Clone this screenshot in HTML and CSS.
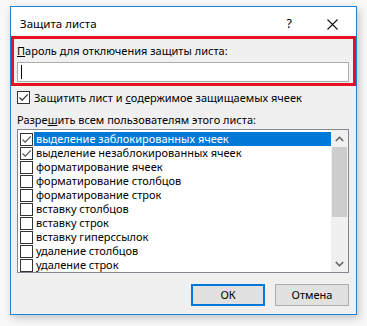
FILE: index.html
```html
<!DOCTYPE html>
<html lang="ru">
<head>
<meta charset="utf-8">
<title>Защита листа</title>
<link rel="stylesheet" href="styles.css">
</head>
<body>
<div class="page">
  <div class="dialog">
    <div class="titlebar">
      <span class="title">Защита листа</span>
      <span class="help">?</span>
      <svg class="close" width="11" height="11" viewBox="0 0 11 11"><path d="M0.5 0.5 L10.5 10.5 M10.5 0.5 L0.5 10.5" stroke="#111" stroke-width="1.1" fill="none"/></svg>
    </div>
    <div class="content">
      <div class="pwbox">
        <div class="label"><u>П</u>ароль для отключения защиты листа:</div>
        <div class="input"><span class="caret"></span></div>
      </div>
      <div class="protect">
        <span class="cb"><svg width="11" height="11" viewBox="0 0 11 11"><path d="M1.5 5.5 L4.2 8.2 L9.8 2.3" stroke="#333" stroke-width="1.2" fill="none"/></svg></span>
        <span class="ptext">Защитить лист и <u>с</u>одержимое защищаемых ячеек</span>
      </div>
      <div class="label2">Разре<u>ш</u>ить всем пользователям этого листа:</div>
      <div class="list">
        <div class="items">
          <div class="item sel"><span class="cb"><svg width="11" height="11" viewBox="0 0 11 11"><path d="M1.5 5.5 L4.2 8.2 L9.8 2.3" stroke="#555" stroke-width="1.2" fill="none"/></svg></span><span class="itext">выделение заблокированных ячеек</span></div>
          <div class="item"><span class="cb"><svg width="11" height="11" viewBox="0 0 11 11"><path d="M1.5 5.5 L4.2 8.2 L9.8 2.3" stroke="#555" stroke-width="1.2" fill="none"/></svg></span><span class="itext">выделение незаблокированных ячеек</span></div>
          <div class="item"><span class="cb"></span><span class="itext">форматирование ячеек</span></div>
          <div class="item"><span class="cb"></span><span class="itext">форматирование столбцов</span></div>
          <div class="item"><span class="cb"></span><span class="itext">форматирование строк</span></div>
          <div class="item"><span class="cb"></span><span class="itext">вставку столбцов</span></div>
          <div class="item"><span class="cb"></span><span class="itext">вставку строк</span></div>
          <div class="item"><span class="cb"></span><span class="itext">вставку гиперссылок</span></div>
          <div class="item"><span class="cb"></span><span class="itext">удаление столбцов</span></div>
          <div class="item"><span class="cb"></span><span class="itext">удаление строк</span></div>
        </div>
        <div class="scroll">
          <div class="arrow"><svg width="9" height="6" viewBox="0 0 9 6"><path d="M0.8 5 L4.5 1.3 L8.2 5" stroke="#606060" stroke-width="1.6" fill="none"/></svg></div>
          <div class="thumb"></div>
          <div class="track"></div>
          <div class="arrow"><svg width="9" height="6" viewBox="0 0 9 6"><path d="M0.8 1 L4.5 4.7 L8.2 1" stroke="#606060" stroke-width="1.6" fill="none"/></svg></div>
        </div>
      </div>
      <div class="buttons">
        <div class="btn ok">ОК</div>
        <div class="btn">Отмена</div>
      </div>
    </div>
  </div>
</div>
</body>
</html>
```
FILE: styles.css
```css
html, body {
  margin: 0;
  padding: 0;
}
body {
  background: #f8f8f8;
  width: 367px;
  height: 326px;
  overflow: hidden;
  font-family: "Noto Sans", "Open Sans", sans-serif;
  font-size: 11px;
  line-height: 14px;
  color: #000;
}
.page {
  padding: 6px 0 0 10px;
}
.dialog {
  width: 345px;
  height: 307px;
  border: 1px solid #1883d7;
  background: #f0f0f0;
  box-shadow: 2px 3px 8px rgba(0, 0, 0, 0.22);
  display: flex;
  flex-direction: column;
  overflow: hidden;
}
.titlebar {
  height: 29px;
  box-sizing: border-box;
  padding-top: 4px;
  flex-shrink: 0;
  background: #fff;
  display: flex;
  align-items: center;
}
.title {
  margin-left: 9px;
  font-size: 11.5px;
}
.help {
  margin-left: auto;
  margin-right: 35px;
  font-size: 12.5px;
}
.close {
  margin-right: 18px;
  margin-top: 1px;
}
.content {
  flex: 1;
  display: flex;
  flex-direction: column;
}
.pwbox {
  width: 336px;
  height: 44px;
  flex-shrink: 0;
  border: 3px solid #e81123;
  padding: 0 0 0 3px;
  display: flex;
  flex-direction: column;
}
.label {
  height: 23px;
  line-height: 23px;
}
.input {
  width: 330px;
  height: 18px;
  border: 1px solid #adadad;
  background: #fff;
  display: flex;
  align-items: center;
}
.caret {
  width: 1px;
  height: 14px;
  background: #000;
  margin-left: 3px;
}
.protect {
  display: flex;
  align-items: center;
  margin-top: 5px;
  margin-left: 6px;
  height: 13px;
  flex-shrink: 0;
}
.cb {
  width: 11px;
  height: 11px;
  border: 1px solid #333;
  background: #fff;
  display: flex;
  flex-shrink: 0;
}
.ptext {
  margin-left: 4px;
}
.label2 {
  margin-left: 6px;
  margin-top: 9px;
  height: 14px;
  line-height: 14px;
  flex-shrink: 0;
}
.list {
  margin-left: 6px;
  margin-top: 2px;
  width: 330px;
  height: 142px;
  flex-shrink: 0;
  border: 1px solid #828790;
  background: #fff;
  display: flex;
  overflow: hidden;
}
.items {
  flex: 1;
  padding-top: 2px;
  padding-left: 2px;
}
.item {
  height: 14px;
  display: flex;
  align-items: center;
}
.itext {
  height: 14px;
  line-height: 14px;
  padding: 0 2px;
  margin-left: 1px;
  flex: 1;
  white-space: nowrap;
}
.item.sel .itext {
  background: #0078d7;
  color: #fff;
}
.scroll {
  width: 17px;
  display: flex;
  flex-direction: column;
  background: #f0f0f0;
}
.arrow {
  height: 17px;
  display: flex;
  align-items: center;
  justify-content: center;
}
.thumb {
  height: 70px;
  margin: 0 1px;
  background: #cdcdcd;
}
.track {
  flex: 1;
}
.buttons {
  display: flex;
  justify-content: flex-end;
  gap: 10px;
  margin-top: 11px;
  margin-right: 7px;
}
.btn {
  width: 72px;
  height: 20px;
  border: 1px solid #adadad;
  background: #e1e1e1;
  display: flex;
  align-items: center;
  justify-content: center;
}
.btn.ok {
  border: 2px solid #0078d7;
  width: 70px;
  height: 18px;
}
```
